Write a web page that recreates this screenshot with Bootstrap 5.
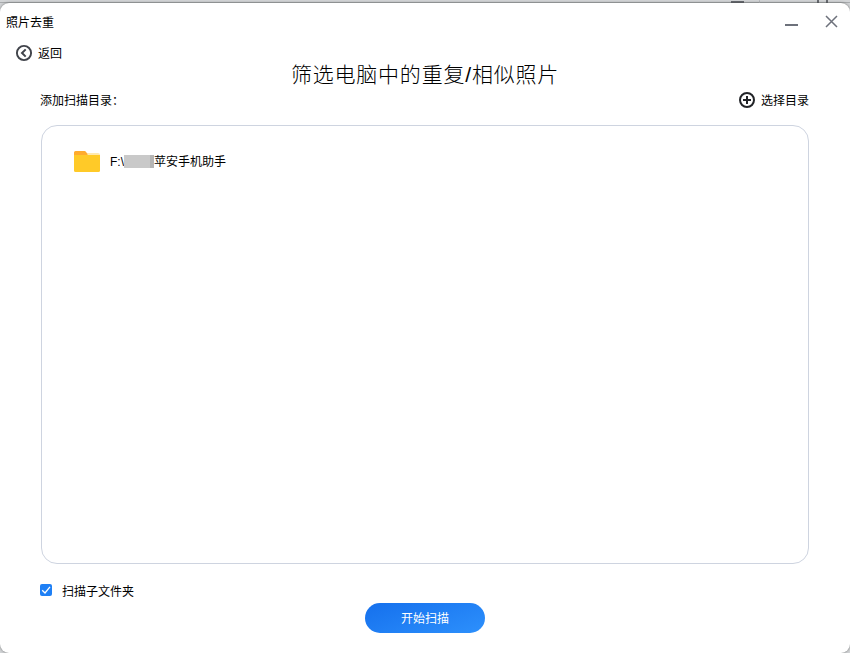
<!DOCTYPE html>
<html lang="zh-CN">
<head>
<meta charset="utf-8">
<meta name="viewport" content="width=device-width, initial-scale=1">
<title>照片去重</title>
<link href="https://cdn.jsdelivr.net/npm/bootstrap@5.3.0/dist/css/bootstrap.min.css" rel="stylesheet">
<style>
html, body { height: 100%; }
body { margin: 0; background: #d3d5d7; font-family: "Liberation Sans", "Noto Sans CJK SC", sans-serif; font-size: 12px; line-height: 18px; color: #000; overflow: hidden; }
svg { display: block; flex: none; }
.backdrop { height: 3px; flex: none; border-bottom: 1px solid #a9acae; padding-right: 21px; }
.app-window { border-radius: 9px; background: #fff; min-height: 0; box-shadow: 0 0 3px rgba(0,0,0,.45); }
.title-bar { height: 38px; padding: 0 12px 0 6px; }
.plain-btn { border: 0; background: none; padding: 0; color: #000; font-size: 12px; line-height: 18px; }
.plain-btn.win-btn { color: #6d717b; }
.label-low { padding-top: 2px; }
.back-row { height: 18px; padding-left: 15px; margin-top: 3px; }
.back-row .plain-btn { gap: 5px; height: 18px; }
.page-title { font-size: 21px; line-height: 28px; letter-spacing: .8px; font-weight: 300; font-family: "Liberation Sans", "Noto Sans CJK SC", sans-serif; margin: -1px 0 0; }
.dir-row { height: 18px; padding: 0 41px 0 40px; margin-top: 2px; }
.dir-row .plain-btn { gap: 5px; height: 18px; }
.dir-panel { height: 439px; margin: 16px 41px 0; border: 1px solid #ced4e0; border-radius: 16px; padding: 25px 32px; flex: none; }
.folder-path { padding-left: 10px; }
.redacted { width: 30px; height: 13px; background: linear-gradient(90deg, #c9c9c9 26px, #b5b5b5 26px); }
.scan-check { padding-left: 40px; margin-top: 17px; height: 18px; gap: 10px; }
.scan-check .form-check-input { width: 12px; height: 12px; margin: 0; border-radius: 2px; border: 0; }
.scan-check .form-check-input:checked { background-color: #1f80f5; background-image: none; }
.check-box { position: relative; width: 12px; height: 12px; }
.check-box input { display: block; }
.check-box svg { position: absolute; inset: 0; pointer-events: none; }
.scan-check .check-text { padding-top: 3px; }
.start-btn { width: 120px; height: 30px; border: 0; padding: 1px 0 0; font-size: 12px; line-height: 30px; color: #fff; background: linear-gradient(160deg, #1570ed, #2d90fc); margin-top: 4px; }
</style>
</head>
<body class="d-flex flex-column">
<div class="backdrop d-flex justify-content-end">
  <svg width="100" height="3" fill="#686b70"><path d="M2 1h13v2H2z"/><path d="M30 0h1v3h-1z" fill="#b9bbbe"/><path d="M88 0h2v3h-2zM97 0h2v3h-2z"/></svg>
</div>
<main class="app-window d-flex flex-column flex-grow-1">
  <header class="title-bar d-flex justify-content-between align-items-center">
    <span class="label-low">照片去重</span>
    <div class="d-flex align-items-center">
      <button class="plain-btn win-btn" aria-label="最小化"><svg width="15" height="14"><path d="M0 9h13v2H0z" fill="currentColor"/></svg></button>
      <button class="plain-btn win-btn ms-4" aria-label="关闭"><svg width="14" height="14" fill="none" stroke="currentColor" stroke-width="1.5"><path d="M2 1l11 11M13 1L2 12"/></svg></button>
    </div>
  </header>
  <div class="back-row d-flex">
    <button class="plain-btn d-flex align-items-center">
      <svg width="18" height="18" fill="none" stroke="#41444b"><circle cx="9" cy="9" r="7.1" stroke-width="1.9"/><path d="M10.7 5.4L7 9l3.7 3.6" stroke-width="2"/></svg>
      <span class="label-low">返回</span>
    </button>
  </div>
  <h1 class="page-title text-center">筛选电脑中的重复/相似照片</h1>
  <div class="dir-row d-flex justify-content-between align-items-center">
    <span class="label-low">添加扫描目录：</span>
    <button class="plain-btn d-flex align-items-center">
      <svg width="18" height="18" fill="none" stroke="#222428" stroke-width="2"><circle cx="9" cy="9" r="7"/><path d="M9 5v8M5 9h8"/></svg>
      <span class="label-low">选择目录</span>
    </button>
  </div>
  <section class="dir-panel">
    <div class="d-flex align-items-center">
      <svg width="26" height="21" viewBox="0 0 26 21"><path d="M11 2h13q2 0 2 2v4H11z" fill="#ffe9af"/><path d="M0 8V1.5Q0 0 1.5 0h9q1 0 1.6 1l1.4 2v5z" fill="#ffab2d"/><path d="M0 4h26v15.5q0 1.5-1.5 1.5h-23Q0 21 0 19.5z" fill="#ffca28"/></svg>
      <span class="folder-path d-flex align-items-center"><span>F:\</span><span class="redacted"></span><span>苹安手机助手</span></span>
    </div>
  </section>
  <label class="scan-check d-flex align-items-center">
    <span class="check-box"><input class="form-check-input" type="checkbox" checked><svg width="12" height="12" fill="none" stroke="#fff" stroke-width="1.3"><path d="M2.2 6.2L5 9l5-6.2"/></svg></span>
    <span class="check-text">扫描子文件夹</span>
  </label>
  <button class="btn start-btn rounded-pill align-self-center">开始扫描</button>
</main>
<script src="https://cdn.jsdelivr.net/npm/bootstrap@5.3.0/dist/js/bootstrap.bundle.min.js"></script>
</body>
</html>
